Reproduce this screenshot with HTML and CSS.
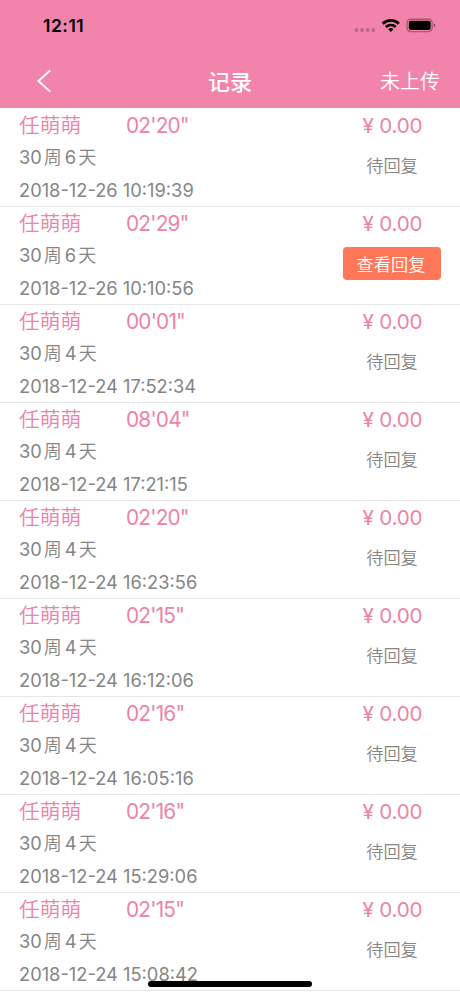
FILE: index.html
```html
<!DOCTYPE html>
<html lang="zh-CN">

<head>
    <meta charset="UTF-8">
    <meta name="viewport" content="width=device-width, initial-scale=1.0">
    <title>记录</title>
    <link rel="stylesheet" href="styles.css">
</head>

<body>
    <header class="header">
        <div class="statusBar">
            <span class="clock">12:11</span>
            <svg class="statusIcons" width="84" height="18" viewBox="0 0 84 18">
                <g fill="#b9668a">
                    <circle cx="3.5" cy="13" r="1.9" />
                    <circle cx="9.1" cy="13" r="1.9" />
                    <circle cx="14.7" cy="13" r="1.9" />
                    <circle cx="20.3" cy="13" r="1.9" />
                </g>
                <g fill="none" stroke="#000" stroke-width="2.7">
                    <path d="M29.7 6.7a11.6 11.6 0 0 1 16.2 0" />
                    <path d="M32.9 10a7 7 0 0 1 9.8 0" />
                </g>
                <path d="M37.8 15l-2.6-2.8a3.7 3.7 0 0 1 5.2 0z" />
                <rect x="54.1" y="2.1" width="25" height="12.6" rx="3.6" fill="none" stroke="#9b4f6d" stroke-width="1.1" />
                <rect x="55.8" y="3.8" width="21.8" height="9.2" rx="1.9" />
                <path d="M80.8 6.3v4.2c1.8-.7 1.8-3.5 0-4.2z" fill="#7d3e57" />
            </svg>
        </div>
        <nav class="navBar">
            <svg class="back" width="16" height="24" viewBox="0 0 16 24">
                <path d="M14.2 1.4L2.4 12l11.8 10.6" fill="none" stroke="#fff" stroke-width="1.9" />
            </svg>
            <h1 class="title">记录</h1>
            <span class="upload">未上传</span>
        </nav>
    </header>
    <main class="list">
        <div class="record">
            <div class="info">
                <div class="line1"><span class="name">任萌萌</span><span class="time">02'20"</span></div>
                <div class="week">30<i>周</i>6<i>天</i></div>
                <div class="date">2018-12-26 10:19:39</div>
            </div>
            <div class="side">
                <div class="price">¥ 0.00</div>
                <div class="wait">待回复</div>
            </div>
        </div>
        <div class="record">
            <div class="info">
                <div class="line1"><span class="name">任萌萌</span><span class="time">02'29"</span></div>
                <div class="week">30<i>周</i>6<i>天</i></div>
                <div class="date">2018-12-26 10:10:56</div>
            </div>
            <div class="side">
                <div class="price">¥ 0.00</div>
                <button class="reply">查看回复</button>
            </div>
        </div>
        <div class="record">
            <div class="info">
                <div class="line1"><span class="name">任萌萌</span><span class="time">00'01"</span></div>
                <div class="week">30<i>周</i>4<i>天</i></div>
                <div class="date">2018-12-24 17:52:34</div>
            </div>
            <div class="side">
                <div class="price">¥ 0.00</div>
                <div class="wait">待回复</div>
            </div>
        </div>
        <div class="record">
            <div class="info">
                <div class="line1"><span class="name">任萌萌</span><span class="time">08'04"</span></div>
                <div class="week">30<i>周</i>4<i>天</i></div>
                <div class="date">2018-12-24 17:21:15</div>
            </div>
            <div class="side">
                <div class="price">¥ 0.00</div>
                <div class="wait">待回复</div>
            </div>
        </div>
        <div class="record">
            <div class="info">
                <div class="line1"><span class="name">任萌萌</span><span class="time">02'20"</span></div>
                <div class="week">30<i>周</i>4<i>天</i></div>
                <div class="date">2018-12-24 16:23:56</div>
            </div>
            <div class="side">
                <div class="price">¥ 0.00</div>
                <div class="wait">待回复</div>
            </div>
        </div>
        <div class="record">
            <div class="info">
                <div class="line1"><span class="name">任萌萌</span><span class="time">02'15"</span></div>
                <div class="week">30<i>周</i>4<i>天</i></div>
                <div class="date">2018-12-24 16:12:06</div>
            </div>
            <div class="side">
                <div class="price">¥ 0.00</div>
                <div class="wait">待回复</div>
            </div>
        </div>
        <div class="record">
            <div class="info">
                <div class="line1"><span class="name">任萌萌</span><span class="time">02'16"</span></div>
                <div class="week">30<i>周</i>4<i>天</i></div>
                <div class="date">2018-12-24 16:05:16</div>
            </div>
            <div class="side">
                <div class="price">¥ 0.00</div>
                <div class="wait">待回复</div>
            </div>
        </div>
        <div class="record">
            <div class="info">
                <div class="line1"><span class="name">任萌萌</span><span class="time">02'16"</span></div>
                <div class="week">30<i>周</i>4<i>天</i></div>
                <div class="date">2018-12-24 15:29:06</div>
            </div>
            <div class="side">
                <div class="price">¥ 0.00</div>
                <div class="wait">待回复</div>
            </div>
        </div>
        <div class="record">
            <div class="info">
                <div class="line1"><span class="name">任萌萌</span><span class="time">02'15"</span></div>
                <div class="week">30<i>周</i>4<i>天</i></div>
                <div class="date">2018-12-24 15:08:42</div>
            </div>
            <div class="side">
                <div class="price">¥ 0.00</div>
                <div class="wait">待回复</div>
            </div>
        </div>
    </main>
    <div class="homeBar"></div>
</body>

</html>
```
FILE: styles.css
```css
* {
    box-sizing: border-box;
}

body {
    margin: 0;
    height: 996px;
    overflow: hidden;
    background-color: #fff;
    color: #858585;
    font-family: Inter, "Noto Sans CJK SC", sans-serif;
    font-weight: 350;
}

.header {
    height: 108px;
    background-color: #f283aa;
}

.statusBar {
    display: flex;
    justify-content: space-between;
    align-items: center;
    height: 54px;
    padding: 0 23px 3px 43px;
}

.clock {
    color: #000;
    font-size: 17.5px;
    font-weight: 600;
    letter-spacing: 0.5px;
}

.navBar {
    display: grid;
    grid-template-columns: 1fr auto 1fr;
    align-items: center;
    height: 54px;
    padding: 0 20px 0 36px;
    color: #fff;
}

.title {
    margin: 0;
    padding-bottom: 2px;
    font-size: 22px;
    font-weight: 500;
    transform: translateX(-8px);
}

.upload {
    justify-self: end;
    padding-bottom: 1px;
    font-size: 20px;
}

.list {
    padding-top: 1px;
}

.record {
    display: flex;
    justify-content: space-between;
    height: 98px;
    padding: 0 19px;
    border-bottom: 1px solid #e6e6e6;
}

.line1 {
    display: flex;
    height: 32px;
    line-height: 34px;
    color: #ee82a8;
    font-size: 20.8px;
}

.name {
    width: 107px;
}

.time {
    font-weight: 400;
    letter-spacing: -0.8px;
}

.week,
.date {
    height: 33px;
    line-height: 33px;
    font-size: 18.3px;
    font-weight: 400;
}

.week i {
    margin: 0 3px 0 2px;
    font-size: 18px;
    font-style: normal;
    font-weight: 350;
}

.side {
    display: flex;
    flex-direction: column;
    align-items: center;
    width: 98px;
}

.price {
    height: 32px;
    line-height: 34px;
    padding-left: 1px;
    color: #ee82a8;
    font-size: 20.6px;
    font-weight: 400;
    letter-spacing: -0.2px;
}

.wait {
    height: 48px;
    line-height: 50px;
    font-size: 17.2px;
}

.reply {
    width: 98px;
    height: 33px;
    margin-top: 8px;
    padding: 0 2px 1px 0;
    border: 0;
    border-radius: 4px;
    background-color: #ff7658;
    color: #fff;
    font: inherit;
    font-size: 17.2px;
}

.homeBar {
    position: fixed;
    left: 148px;
    bottom: 9px;
    width: 164px;
    height: 6px;
    border-radius: 3px;
    background-color: #000;
}
```
